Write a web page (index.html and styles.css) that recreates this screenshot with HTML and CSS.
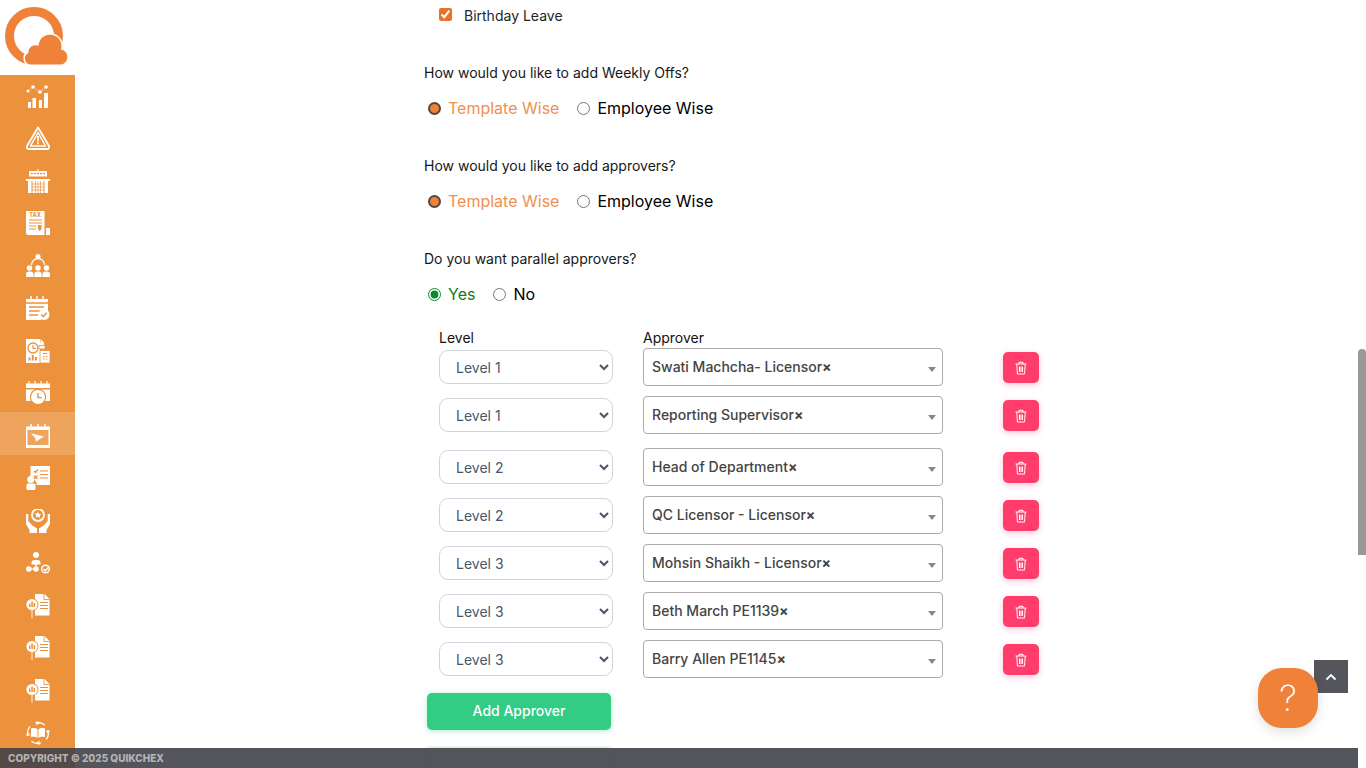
FILE: index.html
```html
<!DOCTYPE html>
<html lang="en">
<head>
<meta charset="utf-8">
<title>Leave Settings</title>
<link rel="stylesheet" href="styles.css">
</head>
<body>
<svg class="defs" width="0" height="0" aria-hidden="true">
  <symbol id="report" viewBox="0 0 24 24">
    <path d="M9 0h9.500L23.500 5v16.500H9z" fill="#fff"/>
    <path d="M18 0v5.500h5.500" fill="none" stroke="#ed923c" stroke-width=".9"/>
    <path d="M14 8.500h8M14 11.500h8M14 14.500h8" stroke="#ed923c" stroke-width="1"/>
    <circle cx="6" cy="10.500" r="6.500" fill="#ed923c"/>
    <circle cx="6" cy="10.500" r="5.600" fill="#fff"/>
    <path d="M3 9.500h1.500v3.500H3zM5.300 7.500h1.500V13H5.300zM7.600 9h1.500v4H7.600z" fill="#ed923c"/>
    <path d="M5.300 16h1.400v8H5.300z" fill="#f7d7b5"/>
  </symbol>
  <symbol id="trash" viewBox="0 0 14 14">
    <path d="M1.500 3h11M5 3V1.300h4V3M2.800 3l.6 10h7.200l.6-10M5.500 5.500V11M7 5.500V11M8.500 5.500V11" fill="none" stroke="#fff" stroke-width="1"/>
  </symbol>
</svg>
<div class="shell">
  <aside class="sidebar">
    <div class="logo">
      <svg width="75" height="75" viewBox="0 0 75 75">
        <circle cx="34" cy="36" r="24.500" fill="none" stroke="#ef8139" stroke-width="9"/>
        <path d="M31 64.500A6 6 0 0 1 28.500 53 7 7 0 0 1 38.500 46 11.500 11.500 0 1 1 61 49.500 7.600 7.600 0 0 1 61 64.500Z" fill="#ef8139" stroke="#fff" stroke-width="3" paint-order="stroke"/>
      </svg>
    </div>
    <nav class="menu">
      <a class="item" href="#"><svg class="ico" viewBox="0 0 24 24"><path d="M2 24v-6h3v6zM6.500 24V14H10v10zM13 24v-8h3v8zM18 24V9h4v15z" fill="#fff"/><circle cx="2" cy="7" r="1.500" fill="#fff"/><circle cx="7" cy="3" r="1.800" fill="#fff"/><circle cx="14" cy="8" r="1.800" fill="#fff"/><circle cx="20" cy="3" r="1.800" fill="#fff"/><path d="M2 7 7 3l7 5 6-5" fill="none" stroke="#fff" stroke-width=".7" stroke-dasharray="1.500 1"/></svg></a>
      <a class="item" href="#"><svg class="ico" viewBox="0 0 24 24"><path d="M12 1.500 23 20a2 2 0 0 1-1.700 3H2.700A2 2 0 0 1 1 20z" fill="none" stroke="#fff" stroke-width="1.800" stroke-linejoin="round"/><path d="M12 6.500 19.500 20h-15z" fill="none" stroke="#fff" stroke-width="1.500" stroke-linejoin="round"/><path d="M11 10h2l-.3 5.500h-1.400zM11 16.300h2v2h-2z" fill="#fff"/></svg></a>
      <a class="item" href="#"><svg class="ico" viewBox="0 0 24 24"><path d="M11.500 0h1v2h-1zM3 2h18v5.500H3zM0 10h24v2H0zM2 12h20v12H2z" fill="#fff"/><path d="M5 4.700h14" stroke="#ed923c" stroke-width="1.200" stroke-dasharray="2 1"/><path d="M6 12v12M18 12v12" stroke="#ed923c" stroke-width="1"/><path d="M9.500 12v12M12 12v12M14.500 12v12M6 15h12M6 18h12M6 21h12" stroke="#ed923c" stroke-width=".7"/></svg></a>
      <a class="item" href="#"><svg class="ico" viewBox="0 0 24 24"><path d="M0 0h18.500v24H2a2 2 0 0 1-2-2z" fill="#fff"/><path d="M20 17h4v6a1.500 1.500 0 0 1-4 0z" fill="#fff"/><text class="tax" x="9.200" y="6">TAX</text><path d="M3 9h13M3 12h13M3 15h7M3 18h7" stroke="#ed923c" stroke-width="1.100"/><path d="M12 14h3.500v4l-1.750 2L12 18z" fill="#ed923c"/></svg></a>
      <a class="item" href="#"><svg class="ico" viewBox="0 0 24 24"><circle cx="12" cy="2.500" r="2.500" fill="#fff"/><path d="M5.500 11a6.500 6.500 0 0 1 13 0" fill="none" stroke="#fff" stroke-width="1.300"/><circle cx="3.500" cy="14" r="2.700" fill="#fff"/><circle cx="12" cy="14" r="2.700" fill="#fff"/><circle cx="20.500" cy="14" r="2.700" fill="#fff"/><path d="M0 23v-2.500a3 3 0 0 1 3-3h1.500a3 3 0 0 1 3 3V23zM8.300 23v-2.500a3 3 0 0 1 3-3h1.400a3 3 0 0 1 3 3V23zM16.500 23v-2.500a3 3 0 0 1 3-3H21a3 3 0 0 1 3 3V23z" fill="#fff"/></svg></a>
      <a class="item" href="#"><svg class="ico" viewBox="0 0 24 24"><path d="M0 3h22v12a7 7 0 0 0-7 9H0z" fill="#fff"/><path d="M5 0v5M11 0v5M17 0v5" stroke="#fff" stroke-width="1.500"/><path d="M0 7h22M3 11h15M3 15h11M3 19h9" stroke="#ed923c" stroke-width="1.300"/><circle cx="18" cy="18.500" r="5.500" fill="#fff"/><path d="m15.300 18.500 2 2 3.500-3.700" fill="none" stroke="#ed923c" stroke-width="1.500"/></svg></a>
      <a class="item" href="#"><svg class="ico" viewBox="0 0 24 24"><path d="M0 0h14v4h4v6h-4v14H0z" fill="#fff"/><path d="M14.500 0l4 4h-4z" fill="#fff"/><path d="M13 6.500h6v3.500h-6z" fill="#fff" stroke="#ed923c" stroke-width=".8"/><circle cx="7" cy="9" r="5" fill="none" stroke="#ed923c" stroke-width="1.300"/><path d="M7 6v3.300h3" fill="none" stroke="#ed923c" stroke-width="1.200"/><path d="M2.500 21.500v-3h2v3zM5.800 21.500V16h2v5.500zM9 21.500V18h2v3.500z" fill="#ed923c"/><path d="M14 11.500h10V24H14z" fill="#fff" stroke="#ed923c" stroke-width=".8"/><path d="M17 14.500h4M17 17.500h1.500M19.800 17.500h1.500M17 20h1.500M19.800 20h1.500" stroke="#ed923c" stroke-width="1.200"/></svg></a>
      <a class="item" href="#"><svg class="ico" viewBox="0 0 24 24"><path d="M0 2.500h24V7H0zM0 8.500h24V20H0z" fill="#fff"/><path d="M3 0v3M9 0v3M15 0v3M21 0v3" stroke="#fff" stroke-width="1.200"/><circle cx="12" cy="16" r="8.200" fill="#ed923c"/><circle cx="12" cy="16" r="7" fill="#fff"/><path d="M12 12v4.600h3.800" fill="none" stroke="#ed923c" stroke-width="1.400"/></svg></a>
      <a class="item active" href="#"><svg class="ico" viewBox="0 0 24 24"><path d="M0 2.500h24V24H0z" fill="#fff"/><path d="M1.500 6h21v15h-21z" fill="#efa45e"/><path d="M5 0v6M12 0v6M19 0v6" stroke="#fff" stroke-width="1.500"/><path d="M4.500 9l14 3.500-4.500 2.500-4 3-1-4z" fill="#fff" stroke="#efa45e" stroke-width=".4"/></svg></a>
      <a class="item" href="#"><svg class="ico" viewBox="0 0 24 24"><path d="M4.500 0H24v19H10.500a5 5 0 0 0-3-5.500 5 5 0 0 0-3-1.500z" fill="#fff"/><circle cx="4.700" cy="13.500" r="3.500" fill="#fff"/><rect x=".5" y="17.500" width="9" height="6.500" rx="1.500" fill="#fff"/><path d="m8 5 1.500 1.500L12 3.500M8 9.500l3.500 3.500M11.500 9.500 8 13M14 5h8M14 8.500h8M14 12h8" fill="none" stroke="#ed923c" stroke-width="1.200"/></svg></a>
      <a class="item" href="#"><svg class="ico" viewBox="0 0 24 24"><circle cx="12" cy="6" r="6" fill="none" stroke="#fff" stroke-width="1.800"/><path d="m12 2.500 1 2.400 2.600.2-2 1.700.7 2.500L12 7.400 9.700 8.800l.7-2.500-2-1.700 2.600-.2z" fill="#fff"/><path d="M0 5h2.300v7l4 4.500 4.700 3V24H3.500v-3L0 15zM24 5h-2.300v7l-4 4.500-4.700 3V24h7.500v-3L24 15z" fill="#fff"/></svg></a>
      <a class="item" href="#"><svg class="ico" viewBox="0 0 24 24"><circle cx="10" cy="4" r="3" fill="#fff"/><path d="M5.500 13.500V12a3 3 0 0 1 3-3h3a3 3 0 0 1 3 3v1.500zM9.300 13.500h1.400v2H9.300z" fill="#fff"/><circle cx="2.800" cy="18" r="2.800" fill="#fff"/><circle cx="10" cy="18" r="2.800" fill="#fff"/><circle cx="19.500" cy="18" r="3.800" fill="none" stroke="#fff" stroke-width="1.400"/><path d="m17.500 18 1.800 1.800 4-4.300" fill="none" stroke="#fff" stroke-width="1.500"/><path d="M4 18h4" stroke="#fff"/></svg></a>
      <a class="item" href="#"><svg class="ico"><use href="#report"/></svg></a>
      <a class="item" href="#"><svg class="ico"><use href="#report"/></svg></a>
      <a class="item" href="#"><svg class="ico"><use href="#report"/></svg></a>
      <a class="item" href="#"><svg class="ico" viewBox="0 0 24 24"><circle cx="12" cy="12" r="10.500" fill="none" stroke="#fff" stroke-width="1.300" stroke-dasharray="10 6.500" stroke-dashoffset="3"/><path d="m10.500 0 3.500 2-3.500 2.300zM0 14.500 2 11l2.300 3.500zM24 9.500 22 13l-2.300-3.500zM13.500 24 10 22l3.500-2.300z" fill="#fff"/><path d="M5 7.500c2.500-.7 5.300-.5 6.500 1V17c-1.200-1.200-4-1.500-6.500-1zM19 7.500c-2.500-.7-5.300-.5-6.500 1V17c1.200-1.200 4-1.500 6.500-1z" fill="#fff"/></svg></a>
    </nav>
  </aside>

  <main class="content">
    <label class="check-row"><input class="check" type="checkbox" checked><span>Birthday Leave</span></label>

    <section class="question">
      <p class="prompt">How would you like to add Weekly Offs?</p>
      <div class="choices">
        <label class="choice orange"><input class="radio-orange" type="radio" name="offs" checked><span>Template Wise</span></label>
        <label class="choice"><input class="radio-plain" type="radio" name="offs"><span>Employee Wise</span></label>
      </div>
    </section>

    <section class="question">
      <p class="prompt">How would you like to add approvers?</p>
      <div class="choices">
        <label class="choice orange"><input class="radio-orange" type="radio" name="appr" checked><span>Template Wise</span></label>
        <label class="choice"><input class="radio-plain" type="radio" name="appr"><span>Employee Wise</span></label>
      </div>
    </section>

    <section class="question">
      <p class="prompt">Do you want parallel approvers?</p>
      <div class="choices">
        <label class="choice green"><input class="radio-green" type="radio" name="par" checked><span>Yes</span></label>
        <label class="choice"><input class="radio-plain" type="radio" name="par"><span>No</span></label>
      </div>
    </section>

    <div class="approvers">
      <div class="heads"><span class="head-level">Level</span><span>Approver</span></div>

      <div class="row">
        <select class="level"><option>Level 1</option></select>
        <div class="picker"><span class="picked">Swati Machcha- Licensor<b class="x">×</b></span><i class="caret"></i></div>
        <button class="del" type="button" aria-label="Delete"><svg class="bin"><use href="#trash"/></svg></button>
      </div>
      <div class="row tall">
        <select class="level"><option>Level 1</option></select>
        <div class="picker"><span class="picked">Reporting Supervisor<b class="x">×</b></span><i class="caret"></i></div>
        <button class="del" type="button" aria-label="Delete"><svg class="bin"><use href="#trash"/></svg></button>
      </div>
      <div class="row">
        <select class="level"><option>Level 2</option></select>
        <div class="picker"><span class="picked">Head of Department<b class="x">×</b></span><i class="caret"></i></div>
        <button class="del" type="button" aria-label="Delete"><svg class="bin"><use href="#trash"/></svg></button>
      </div>
      <div class="row">
        <select class="level"><option>Level 2</option></select>
        <div class="picker"><span class="picked">QC Licensor - Licensor<b class="x">×</b></span><i class="caret"></i></div>
        <button class="del" type="button" aria-label="Delete"><svg class="bin"><use href="#trash"/></svg></button>
      </div>
      <div class="row">
        <select class="level"><option>Level 3</option></select>
        <div class="picker"><span class="picked">Mohsin Shaikh - Licensor<b class="x">×</b></span><i class="caret"></i></div>
        <button class="del" type="button" aria-label="Delete"><svg class="bin"><use href="#trash"/></svg></button>
      </div>
      <div class="row">
        <select class="level"><option>Level 3</option></select>
        <div class="picker"><span class="picked">Beth March PE1139<b class="x">×</b></span><i class="caret"></i></div>
        <button class="del" type="button" aria-label="Delete"><svg class="bin"><use href="#trash"/></svg></button>
      </div>
      <div class="row">
        <select class="level"><option>Level 3</option></select>
        <div class="picker"><span class="picked">Barry Allen PE1145<b class="x">×</b></span><i class="caret"></i></div>
        <button class="del" type="button" aria-label="Delete"><svg class="bin"><use href="#trash"/></svg></button>
      </div>
    </div>

    <button class="add" type="button">Add Approver</button>
    <div class="next-edge"></div>
  </main>

  <div class="scrollbar"><div class="thumb"></div></div>

  <button class="to-top" type="button" aria-label="Back to top"><svg width="12" height="8" viewBox="0 0 12 8"><path d="M1.500 6.500 6 2l4.500 4.500" fill="none" stroke="#fff" stroke-width="1.800"/></svg></button>
  <button class="help" type="button">?</button>
  <footer class="footer">COPYRIGHT © 2025 QUIKCHEX</footer>
</div>
</body>
</html>
```

FILE: styles.css
```css
* { box-sizing: border-box; }

html, body {
  margin: 0;
  height: 100%;
  overflow: hidden;
  background: #fff;
}

body {
  font-family: Inter, "Liberation Sans", sans-serif;
  font-size: 14px;
  color: #111;
}

.defs { position: absolute; }

.shell {
  position: relative;
  display: grid;
  grid-template-columns: 75px 1fr 8px;
  height: 768px;
  overflow: hidden;
}

/* Sidebar */
.sidebar { display: flex; flex-direction: column; height: 768px; }
.logo { position: relative; z-index: 1; height: 75px; background: #fff; }
.logo svg { display: block; }
.menu { flex: 1; background: #ed923c; display: flex; flex-direction: column; }
.item {
  flex: 0 0 42.5px;
  display: flex;
  align-items: center;
  justify-content: center;
  padding-top: 4px;
}
.item:first-child { margin-top: -2.7px; }
.item.active { background: #efa45e; }
.ico { width: 24px; height: 24px; display: block; }
.tax {
  font: 800 5.500px Inter, "Liberation Sans", sans-serif;
  fill: #ed923c;
  text-anchor: middle;
}

/* Form */
.content { padding: 5px 0 0 349px; min-width: 0; }

.check-row {
  display: flex;
  align-items: center;
  height: 20px;
  padding-left: 15px;
  color: #212529;
}
.check {
  width: 13px;
  height: 13px;
  margin: 0 12px 2px 0;
  accent-color: #e8722c;
}

.question { margin-top: 38px; }
.question + .question { margin-top: 35px; }

.prompt { margin: 0; height: 20px; line-height: 20px; color: #16181b; }

.choices {
  display: flex;
  align-items: center;
  gap: 18px;
  height: 26px;
  margin-top: 12px;
  padding-left: 4px;
  font-size: 16px;
  color: #000;
}
.choice { display: flex; align-items: center; gap: 7px; }
.choice input { width: 13px; height: 13px; margin: 0; }
.orange { color: #f0904f; }
.green { color: #0e7c1c; }

.radio-plain { accent-color: #666; }
.radio-green { accent-color: #0c8a2c; }
.radio-orange {
  appearance: none;
  border-radius: 50%;
  background: #ef8139;
  border: 2px solid #52483f;
}

/* Approver rows */
.approvers { margin-top: 21px; padding-left: 15px; }
.heads { display: flex; height: 20px; line-height: 20px; color: #111; }
.head-level { width: 204px; }

.row { display: flex; align-items: flex-start; height: 48px; }
.row.tall { height: 52px; }

.level {
  width: 174px;
  height: 34px;
  margin: 2px 30px 0 0;
  padding-left: 12px;
  font: 14px Inter, "Liberation Sans", sans-serif;
  color: #4a5568;
  background: #fff;
  border: 1px solid #cfd4dc;
  border-radius: 9px;
}

.picker {
  position: relative;
  display: flex;
  align-items: center;
  width: 300px;
  height: 38px;
  padding: 0 0 2px 8px;
  border: 1px solid #aaa;
  border-radius: 4px;
  color: #444;
  font-weight: 500;
}
.x { font-weight: 700; }
.caret {
  position: absolute;
  right: 6px;
  top: 18px;
  border: 4px solid transparent;
  border-top: 5px solid #888;
  border-bottom: 0;
}

.del {
  display: flex;
  align-items: center;
  justify-content: center;
  width: 36px;
  height: 31px;
  margin: 4px 0 0 60px;
  padding: 0;
  border: 0;
  border-radius: 5px;
  background: #ff3d6c;
  box-shadow: 0 2px 6px rgba(255, 61, 108, .3);
}
.bin { width: 14px; height: 14px; display: block; }

.add {
  display: block;
  width: 184px;
  height: 37px;
  margin: 5px 0 0 3px;
  padding: 0 0 2px;
  border: 0;
  border-radius: 5px;
  background: #33cc85;
  color: #fff;
  font: 500 14px Inter, "Liberation Sans", sans-serif;
  box-shadow: 0 1px 6px rgba(51, 204, 133, .35);
}

.next-edge {
  width: 184px;
  height: 30px;
  margin: 18px 0 0 3px;
  background: #fff;
  box-shadow: 0 0 3px rgba(51, 204, 133, .5);
}

/* Scrollbar */
.scrollbar { padding-top: 349px; background: #fff; }
.thumb { height: 206px; background: #999; border-radius: 4px 4px 0 0; }

/* Overlays */
.to-top {
  position: absolute;
  left: 1314px;
  top: 660px;
  display: flex;
  align-items: center;
  justify-content: center;
  width: 34px;
  height: 33px;
  padding: 0;
  border: 0;
  background: #54565b;
}
.help {
  position: absolute;
  left: 1258px;
  top: 668px;
  width: 60px;
  height: 60px;
  padding: 0;
  border: 0;
  border-radius: 24px;
  background: #ef8139;
  color: #fff;
  font: 200 36px Inter, "Liberation Sans", sans-serif;
  box-shadow: 0 4px 12px rgba(0, 0, 0, .12);
}
.footer {
  position: absolute;
  left: 0;
  bottom: 0;
  width: 1358px;
  height: 20px;
  padding-left: 8px;
  background: rgba(65, 67, 73, .9);
  color: #b4b4b4;
  font-size: 10px;
  font-weight: 800;
  line-height: 20px;
}
```
